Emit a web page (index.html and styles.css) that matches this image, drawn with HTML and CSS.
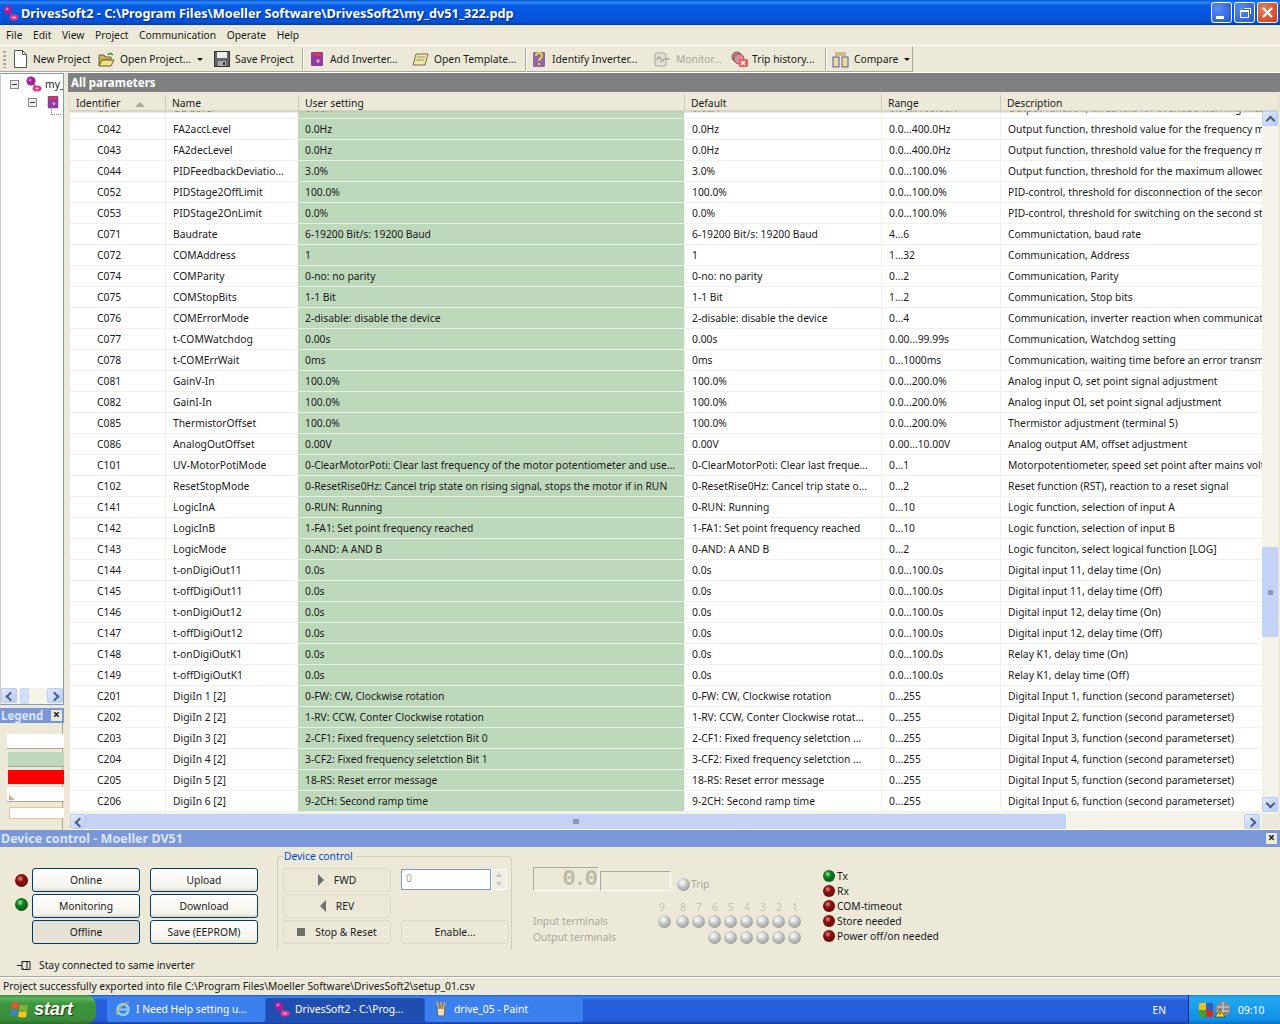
FILE: index.html
```html
<!DOCTYPE html>
<html lang="en">
<head>
  <meta charset="UTF-8" />
  <title>DrivesSoft2</title>
  <link rel="stylesheet" href="styles.css">
</head>
<body>
<svg class="defs" width="0" height="0">
  <symbol id="proj" viewBox="0 0 16 16">
    <path d="M5 6 L11 12" stroke="#7a5a9a" stroke-width="1.5"/>
    <circle cx="5" cy="5" r="4.5" fill="#a0209a"/><circle cx="4" cy="4" r="1.5" fill="#e070d8"/>
    <ellipse cx="11" cy="12.5" rx="4.5" ry="3" fill="#e8308a"/><ellipse cx="11" cy="12.5" rx="2" ry="1" fill="#f8c0e0"/>
  </symbol>
  <symbol id="inv" viewBox="0 0 16 16">
    <rect x="2" y="1" width="12" height="14" rx="1" fill="#8e3ca0"/>
    <rect x="4" y="2" width="8" height="3" fill="#e83050"/>
    <path d="M7 10h4M9 8v4" stroke="#f0b0d0" stroke-width="1.2"/>
  </symbol>
</svg>

<header class="titlebar">
  <svg class="title-icon"><use href="#proj"/></svg>
  <span class="title-text">DrivesSoft2 - C:\Program Files\Moeller Software\DrivesSoft2\my_dv51_322.pdp</span>
  <div class="win-btns">
    <div class="win-btn"><span class="glyph-min"></span></div>
    <div class="win-btn"><span class="glyph-max"></span></div>
    <div class="win-btn close"><svg width="13" height="13" viewBox="0 0 13 13"><path d="M2 2l9 9M11 2l-9 9" stroke="#fff" stroke-width="2.2"/></svg></div>
  </div>
</header>

<nav class="menubar">
  <span>File</span><span>Edit</span><span>View</span><span>Project</span><span>Communication</span><span>Operate</span><span>Help</span>
</nav>

<div class="toolbar-row">
  <div class="toolbar">
    <span class="grip"></span>
    <div class="tool" style="width:86px">
      <svg width="16" height="18" viewBox="0 0 16 18"><path d="M2.5 .5h8l4 4v13h-12z" fill="#fff" stroke="#555"/><path d="M10.5 .5v4h4" fill="none" stroke="#555"/></svg>New Project
    </div>
    <div class="tool" style="width:116px">
      <svg width="17" height="15" viewBox="0 0 17 15"><path d="M1 3h5l1 2h6v3H5L1 14z" fill="#c9b458" stroke="#6b6030"/><path d="M4 8h12l-3 6H1z" fill="#f1e08a" stroke="#6b6030"/><path d="M10 3c1-2 3-2 5 0" fill="none" stroke="#2a8a2a" stroke-width="1.3"/></svg>Open Project...<i class="drop"></i>
    </div>
    <div class="tool" style="width:82px">
      <svg width="16" height="16" viewBox="0 0 16 16"><rect x=".5" y=".5" width="15" height="15" fill="#666" stroke="#333"/><rect x="3" y="1" width="10" height="6" fill="#eee"/><rect x="4" y="10" width="8" height="5" fill="#aaa"/><rect x="9" y="11" width="2" height="3" fill="#333"/></svg>Save Project
    </div>
    <span class="tb-sep"></span>
    <div class="tool" style="width:103px"><svg width="16" height="18"><use href="#inv"/></svg>Add Inverter...</div>
    <div class="tool" style="width:107px">
      <svg width="17" height="15" viewBox="0 0 17 15"><path d="M4 2h12l-3 11H1z" fill="#ece6a0" stroke="#77705a"/><path d="M5 5h8M4 8h8" stroke="#9a9470"/></svg>Open Template...
    </div>
    <span class="tb-sep"></span>
    <div class="tool" style="width:122px">
      <svg class="tall" width="14" height="17" viewBox="0 0 14 17"><rect x="1" y="1" width="12" height="15" rx="1" fill="#9068a8"/><path d="M4 5c0-4 6-4 6 0 0 2-3 2-3 5M7 12v2" fill="none" stroke="#f0d040" stroke-width="2"/></svg>Identify Inverter...
    </div>
    <div class="tool off" style="width:77px">
      <svg width="17" height="15" viewBox="0 0 17 15"><rect x="1" y="1" width="11" height="13" rx="2" fill="#e4e1d4" stroke="#a8a69a"/><path d="M3 8c1-4 3-4 4 0s2 0 3-1h6" fill="none" stroke="#a8a69a" stroke-width="1.3"/></svg>Monitor...
    </div>
    <div class="tool narrow" style="width:88px">
      <svg width="17" height="17" viewBox="0 0 17 17"><circle cx="6" cy="6" r="5" fill="#c08088" stroke="#905058"/><circle cx="8" cy="8" r="5" fill="#d89098" stroke="#905058"/><rect x="8" y="8" width="9" height="8" rx="1" fill="#e86060"/><path d="M10 10l4 4M14 10l-4 4" stroke="#fff" stroke-width="1.4"/></svg>Trip history...
    </div>
    <span class="tb-sep"></span>
    <div class="tool" style="width:80px">
      <svg width="17" height="17" viewBox="0 0 17 17"><rect x="1" y="6" width="6" height="10" fill="#e8e090" stroke="#5858a8"/><rect x="10" y="6" width="6" height="10" fill="#e8e090" stroke="#5858a8"/><path d="M3 2h11M3 4h11" stroke="#b09030"/></svg>Compare<i class="drop"></i>
    </div>
  </div>
</div>

<main class="main">
  <aside class="side">
    <div class="tree">
      <div class="tree-nodes">
        <div class="node"><span class="minus"></span><svg class="node-icon"><use href="#proj"/></svg><span>my_dv51</span></div>
        <div class="node sub"><span class="minus"></span><svg class="node-icon small"><use href="#inv"/></svg></div>
        <span class="tree-line"></span>
      </div>
      <div class="side-scroll">
        <span class="sb-btn left"></span><span class="side-thumb"></span><span class="side-fill"></span><span class="sb-btn right"></span>
      </div>
    </div>
    <div class="legend">
      <div class="legend-head"><span>Legend</span><span class="x-btn">×</span></div>
      <div class="swatches">
        <span class="swatch plain"></span>
        <span class="swatch green"></span>
        <span class="swatch red"></span>
        <span class="swatch flag"></span>
        <span class="swatch outline"></span>
      </div>
    </div>
  </aside>

  <section class="params">
    <h2 class="params-title">All parameters</h2>
    <div class="grid-head">
      <div>Identifier<i class="sort"></i></div><div>Name</div><div>User setting</div><div>Default</div><div>Range</div><div>Description</div>
    </div>
    <div class="grid-wrap">
      <div class="grid-body">
        <div class="row cut"><div>C041</div><div>OL-Level</div><div>0.00A</div><div>0.00A</div><div>0.00...100.00A</div><div>Output function, threshold for overload warning message</div></div>
        <div class="row"><div>C042</div><div>FA2accLevel</div><div>0.0Hz</div><div>0.0Hz</div><div>0.0...400.0Hz</div><div>Output function, threshold value for the frequency matching</div></div>
        <div class="row"><div>C043</div><div>FA2decLevel</div><div>0.0Hz</div><div>0.0Hz</div><div>0.0...400.0Hz</div><div>Output function, threshold value for the frequency matching</div></div>
        <div class="row"><div>C044</div><div>PIDFeedbackDeviatio...</div><div>3.0%</div><div>3.0%</div><div>0.0...100.0%</div><div>Output function, threshold for the maximum allowed deviation</div></div>
        <div class="row"><div>C052</div><div>PIDStage2OffLimit</div><div>100.0%</div><div>100.0%</div><div>0.0...100.0%</div><div>PID-control, threshold for disconnection of the second stage</div></div>
        <div class="row"><div>C053</div><div>PIDStage2OnLimit</div><div>0.0%</div><div>0.0%</div><div>0.0...100.0%</div><div>PID-control, threshold for switching on the second stage</div></div>
        <div class="row"><div>C071</div><div>Baudrate</div><div>6-19200 Bit/s: 19200 Baud</div><div>6-19200 Bit/s: 19200 Baud</div><div>4...6</div><div>Communictation, baud rate</div></div>
        <div class="row"><div>C072</div><div>COMAddress</div><div>1</div><div>1</div><div>1...32</div><div>Communication, Address</div></div>
        <div class="row"><div>C074</div><div>COMParity</div><div>0-no: no parity</div><div>0-no: no parity</div><div>0...2</div><div>Communication, Parity</div></div>
        <div class="row"><div>C075</div><div>COMStopBits</div><div>1-1 Bit</div><div>1-1 Bit</div><div>1...2</div><div>Communication, Stop bits</div></div>
        <div class="row"><div>C076</div><div>COMErrorMode</div><div>2-disable: disable the device</div><div>2-disable: disable the device</div><div>0...4</div><div>Communication, inverter reaction when communication fails</div></div>
        <div class="row"><div>C077</div><div>t-COMWatchdog</div><div>0.00s</div><div>0.00s</div><div>0.00...99.99s</div><div>Communication, Watchdog setting</div></div>
        <div class="row"><div>C078</div><div>t-COMErrWait</div><div>0ms</div><div>0ms</div><div>0...1000ms</div><div>Communication, waiting time before an error transmission</div></div>
        <div class="row"><div>C081</div><div>GainV-In</div><div>100.0%</div><div>100.0%</div><div>0.0...200.0%</div><div>Analog input O, set point signal adjustment</div></div>
        <div class="row"><div>C082</div><div>GainI-In</div><div>100.0%</div><div>100.0%</div><div>0.0...200.0%</div><div>Analog input OI, set point signal adjustment</div></div>
        <div class="row"><div>C085</div><div>ThermistorOffset</div><div>100.0%</div><div>100.0%</div><div>0.0...200.0%</div><div>Thermistor adjustment (terminal 5)</div></div>
        <div class="row"><div>C086</div><div>AnalogOutOffset</div><div>0.00V</div><div>0.00V</div><div>0.00...10.00V</div><div>Analog output AM, offset adjustment</div></div>
        <div class="row"><div>C101</div><div>UV-MotorPotiMode</div><div>0-ClearMotorPoti: Clear last frequency of the motor potentiometer and use...</div><div>0-ClearMotorPoti: Clear last freque...</div><div>0...1</div><div>Motorpotentiometer, speed set point after mains voltage off</div></div>
        <div class="row"><div>C102</div><div>ResetStopMode</div><div>0-ResetRise0Hz: Cancel trip state on rising signal, stops the motor if in RUN</div><div>0-ResetRise0Hz: Cancel trip state o...</div><div>0...2</div><div>Reset function (RST), reaction to a reset signal</div></div>
        <div class="row"><div>C141</div><div>LogicInA</div><div>0-RUN: Running</div><div>0-RUN: Running</div><div>0...10</div><div>Logic function, selection of input A</div></div>
        <div class="row"><div>C142</div><div>LogicInB</div><div>1-FA1: Set point frequency reached</div><div>1-FA1: Set point frequency reached</div><div>0...10</div><div>Logic function, selection of input B</div></div>
        <div class="row"><div>C143</div><div>LogicMode</div><div>0-AND: A AND B</div><div>0-AND: A AND B</div><div>0...2</div><div>Logic funciton, select logical function [LOG]</div></div>
        <div class="row"><div>C144</div><div>t-onDigiOut11</div><div>0.0s</div><div>0.0s</div><div>0.0...100.0s</div><div>Digital input 11, delay time (On)</div></div>
        <div class="row"><div>C145</div><div>t-offDigiOut11</div><div>0.0s</div><div>0.0s</div><div>0.0...100.0s</div><div>Digital input 11, delay time (Off)</div></div>
        <div class="row"><div>C146</div><div>t-onDigiOut12</div><div>0.0s</div><div>0.0s</div><div>0.0...100.0s</div><div>Digital input 12, delay time (On)</div></div>
        <div class="row"><div>C147</div><div>t-offDigiOut12</div><div>0.0s</div><div>0.0s</div><div>0.0...100.0s</div><div>Digital input 12, delay time (Off)</div></div>
        <div class="row"><div>C148</div><div>t-onDigiOutK1</div><div>0.0s</div><div>0.0s</div><div>0.0...100.0s</div><div>Relay K1, delay time (On)</div></div>
        <div class="row"><div>C149</div><div>t-offDigiOutK1</div><div>0.0s</div><div>0.0s</div><div>0.0...100.0s</div><div>Relay K1, delay time (Off)</div></div>
        <div class="row"><div>C201</div><div>DigiIn 1 [2]</div><div>0-FW: CW, Clockwise rotation</div><div>0-FW: CW, Clockwise rotation</div><div>0...255</div><div>Digital Input 1, function (second parameterset)</div></div>
        <div class="row"><div>C202</div><div>DigiIn 2 [2]</div><div>1-RV: CCW, Conter Clockwise rotation</div><div>1-RV: CCW, Conter Clockwise rotat...</div><div>0...255</div><div>Digital Input 2, function (second parameterset)</div></div>
        <div class="row"><div>C203</div><div>DigiIn 3 [2]</div><div>2-CF1: Fixed frequency seletction Bit 0</div><div>2-CF1: Fixed frequency seletction ...</div><div>0...255</div><div>Digital Input 3, function (second parameterset)</div></div>
        <div class="row"><div>C204</div><div>DigiIn 4 [2]</div><div>3-CF2: Fixed frequency seletction Bit 1</div><div>3-CF2: Fixed frequency seletction ...</div><div>0...255</div><div>Digital Input 4, function (second parameterset)</div></div>
        <div class="row"><div>C205</div><div>DigiIn 5 [2]</div><div>18-RS: Reset error message</div><div>18-RS: Reset error message</div><div>0...255</div><div>Digital Input 5, function (second parameterset)</div></div>
        <div class="row"><div>C206</div><div>DigiIn 6 [2]</div><div>9-2CH: Second ramp time</div><div>9-2CH: Second ramp time</div><div>0...255</div><div>Digital Input 6, function (second parameterset)</div></div>
      </div>
      <div class="vscroll">
        <span class="sb-btn up"></span><span class="vs-top"></span><span class="vs-thumb"></span><span class="vs-bottom"></span><span class="sb-btn down"></span>
      </div>
    </div>
    <div class="hscroll">
      <span class="sb-btn left"></span><span class="hs-thumb"></span><span class="hs-rest"></span><span class="sb-btn right"></span><span class="hs-corner"></span>
    </div>
  </section>
</main>

<section class="device">
  <div class="device-head"><span>Device control - Moeller DV51</span><span class="x-btn">×</span></div>
  <div class="device-body">
    <div class="device-top">
      <div class="conn-leds"><span class="led red"></span><span class="led green"></span></div>
      <div class="conn-buttons">
        <button class="xp">Online</button><button class="xp">Upload</button>
        <button class="xp">Monitoring</button><button class="xp">Download</button>
        <button class="xp pressed">Offline</button><button class="xp">Save (EEPROM)</button>
      </div>
      <fieldset class="ctrl-group">
        <legend>Device control</legend>
        <div class="ctrl-grid">
          <button class="flat"><i class="tri-r"></i>FWD</button>
          <div class="spin"><span class="spin-input">0</span><span class="spin-arrows"><i></i><i></i></span></div>
          <button class="flat"><i class="tri-l"></i>REV</button>
          <span></span>
          <button class="flat"><i class="sq"></i>Stop &amp; Reset</button>
          <button class="flat">Enable...</button>
        </div>
      </fieldset>
      <div class="io">
        <div class="io-display">
          <div class="seg">0.0</div>
          <div class="seg-box"></div>
          <span class="led grey"></span><span class="dim">Trip</span>
        </div>
        <div class="io-row nums"><span class="wide">9</span><span>8</span><span>7</span><span>6</span><span>5</span><span>4</span><span>3</span><span>2</span><span>1</span></div>
        <div class="io-row leds"><label class="dim">Input terminals</label><span class="led grey wide"></span><span class="led grey"></span><span class="led grey"></span><span class="led grey"></span><span class="led grey"></span><span class="led grey"></span><span class="led grey"></span><span class="led grey"></span><span class="led grey"></span></div>
        <div class="io-row leds"><label class="dim">Output terminals</label><span class="led grey"></span><span class="led grey"></span><span class="led grey"></span><span class="led grey"></span><span class="led grey"></span><span class="led grey"></span></div>
      </div>
      <ul class="signals">
        <li><span class="led green"></span>Tx</li>
        <li><span class="led red"></span>Rx</li>
        <li><span class="led red"></span>COM-timeout</li>
        <li><span class="led red"></span>Store needed</li>
        <li><span class="led red"></span>Power off/on needed</li>
      </ul>
    </div>
    <div class="stay">
      <svg width="15" height="11" viewBox="0 0 15 11"><path d="M0 5.5h5M5 1v9M5 2h1.500M6 1.500h7v8H6M5 9h2M10 2v7" fill="none" stroke="#222"/></svg>
      Stay connected to same inverter
    </div>
  </div>
</section>

<footer class="statusbar">Project successfully exported into file C:\Program Files\Moeller Software\DrivesSoft2\setup_01.csv</footer>

<div class="taskbar">
  <div class="start">
    <svg width="17" height="17" viewBox="0 0 17 17"><path d="M1 2c2-1 4-1 7 .5L7 8C4 7 2 7 0 8z" fill="#e8572a"/><path d="M9 3c3 1.500 5 1.500 8 .5l-1 6c-3 1-5 .5-8-.5z" fill="#7fb13b"/><path d="M0 9c2-1 4-1 6.500 0l-1 6c-3-1-5-1-6.500 0z" fill="#3f7fd8"/><path d="M8 10c3 1 5 1 8 0l-1 6c-3 1-5 .5-8-.5z" fill="#f5c318"/></svg>
    <span>start</span>
  </div>
  <div class="task">
    <svg width="16" height="16" viewBox="0 0 16 16"><ellipse cx="8" cy="8.500" rx="5.500" ry="5.500" fill="none" stroke="#8fd0f8" stroke-width="2.500"/><path d="M3 8.500h10" stroke="#8fd0f8" stroke-width="2"/><path d="M2 14C1 10 8 2 14 1" fill="none" stroke="#e8b830" stroke-width="1.200"/></svg>
    <span>I Need Help setting u...</span>
  </div>
  <div class="task active"><svg width="16" height="16"><use href="#proj"/></svg><span>DrivesSoft2 - C:\Prog...</span></div>
  <div class="task">
    <svg width="16" height="16" viewBox="0 0 16 16"><path d="M4 7h8l-1 8H5z" fill="#e8e0c0" stroke="#665"/><path d="M6 7l-2-6M8 7V1M10 7l2-6" stroke="#e8b030" stroke-width="1.500"/><path d="M7 7l0-4" stroke="#d04040"/></svg>
    <span>drive_05 - Paint</span>
  </div>
  <div class="lang">EN</div>
  <div class="tray">
    <svg width="16" height="16" viewBox="0 0 16 16"><rect x="1" y="1" width="7" height="7" fill="#f0c020"/><rect x="8" y="1" width="7" height="7" fill="#3060c0"/><rect x="1" y="8" width="7" height="7" fill="#40a030"/><rect x="8" y="8" width="7" height="7" fill="#d03020"/></svg>
    <svg width="17" height="17" viewBox="0 0 17 17"><circle cx="9" cy="8" r="7.500" fill="#8a8a8a"/><path d="M3 6h12M3 10h12M9 1v14" stroke="#d8d8d8"/><path d="M6 8l5 8H1z" fill="#f8d820" stroke="#222" stroke-width=".6"/><path d="M6 10.500v3" stroke="#111"/></svg>
    <span class="clock">09:10</span>
  </div>
</div>
</body>
</html>
```

FILE: styles.css
```css
* {
  margin: 0;
  padding: 0;
  box-sizing: border-box;
}

html, body {
  width: 1280px;
  height: 1024px;
  overflow: hidden;
}

body {
  background: #ece9d8;
  color: #1a1a1a;
  font-family: "Noto Sans", sans-serif;
  font-size: 10.3px;
  display: flex;
  flex-direction: column;
}

.defs { position: absolute; }

/* Title bar */
.titlebar {
  height: 25px;
  display: flex;
  align-items: center;
  padding: 0 2px 0 3px;
  background: linear-gradient(180deg, #0a58d8 0%, #2a86f4 10%, #0a5ce4 22%, #0454e0 70%, #0450d0 90%, #023aa8 100%);
}

.title-icon { width: 16px; height: 16px; }

.title-text {
  margin-left: 2px;
  color: #fff;
  font-weight: bold;
  font-size: 12.7px;
  text-shadow: 1px 1px 1px #0a2a80;
}

.win-btns {
  margin-left: auto;
  display: flex;
  gap: 2px;
}

.win-btn {
  width: 21px;
  height: 21px;
  border: 1px solid #fff;
  border-radius: 3px;
  background: radial-gradient(circle at 30% 30%, #5a8ef0, #2454d0);
  display: flex;
  align-items: center;
  justify-content: center;
}

.win-btn.close { background: radial-gradient(circle at 30% 30%, #e88060, #c83a18); }

.glyph-min {
  width: 8px;
  height: 3px;
  margin: 9px 4px 0 0;
  background: #fff;
}

.glyph-max {
  width: 9px;
  height: 8px;
  border: 1px solid #fff;
  border-top-width: 2px;
  margin-top: 2px;
  box-shadow: 2px -2px 0 -1px #2454d0, 3px -3px 0 -1px #fff;
}

/* Menu */
.menubar {
  height: 20px;
  display: flex;
  align-items: center;
  padding-left: 6px;
  gap: 10.5px;
}

/* Toolbar */
.toolbar-row {
  height: 28px;
  padding-top: 1px;
  border-top: 1px solid #fff;
  border-bottom: 1px solid #fff;
}

.toolbar {
  width: 913px;
  height: 25px;
  display: flex;
  align-items: center;
  padding-left: 3px;
  border-right: 1px solid #aca899;
  border-bottom: 1px solid #aca899;
}

.grip {
  width: 3px;
  height: 17px;
  margin-right: 6px;
  background: repeating-linear-gradient(180deg, #aca899 0 2px, transparent 2px 4px);
}

.tool {
  display: flex;
  align-items: center;
  gap: 5px;
  white-space: nowrap;
  flex: none;
  height: 22px;
}

.tool.off { color: #aca899; }
.tool.narrow { gap: 4px; }
.tool .tall { margin-right: 1px; }

.drop {
  width: 0;
  height: 0;
  margin-left: 1px;
  border: 3px solid transparent;
  border-top: 3px solid #111;
  border-bottom: 0;
}

.tb-sep {
  width: 1px;
  height: 22px;
  margin: 0 6px;
  background: #aca899;
  box-shadow: 1px 0 0 #fff;
}

/* Main area */
.main {
  height: 757px;
  display: flex;
}

.side {
  width: 64px;
  flex: none;
  display: flex;
  flex-direction: column;
}

.tree {
  height: 632px;
  background: #fff;
  border: 1px solid #7f9db9;
  border-left-color: #ccc;
  display: flex;
  flex-direction: column;
}

.tree-nodes {
  flex: 1;
  position: relative;
  overflow: hidden;
}

.node {
  height: 16px;
  margin-top: 2px;
  display: flex;
  align-items: center;
  padding-left: 9px;
  gap: 7px;
  white-space: nowrap;
}

.node.sub { padding-left: 27px; gap: 9px; }

.minus {
  flex: none;
  width: 9px;
  height: 9px;
  border: 1px solid #888;
  background: linear-gradient(#333, #333) center / 5px 1px no-repeat, #eee;
}

.node-icon { width: 16px; height: 16px; flex: none; margin-right: -4px; }
.node-icon.small { width: 14px; height: 14px; }

.tree-line {
  position: absolute;
  left: 50px;
  top: 33px;
  width: 10px;
  height: 8px;
  border-left: 1px dotted #888;
  border-bottom: 1px dotted #888;
}

.side-scroll {
  height: 16px;
  display: flex;
  background: #f6f4ea;
}

.side-thumb {
  width: 9px;
  margin-left: 3px;
  border: 1px solid #c8d6f4;
  border-radius: 2px;
  background: #d4e0fa;
}

.side-fill { flex: 1; }

.legend {
  flex: 1;
  margin-top: 3px;
  display: flex;
  flex-direction: column;
}

.legend-head, .device-head {
  display: flex;
  align-items: center;
  justify-content: space-between;
  background: #7b97d8;
  color: #dce6fa;
  font-weight: bold;
  padding: 0 2px 0 1px;
}

.legend-head {
  height: 15px;
  font-size: 11.5px;
  padding-bottom: 1px;
}

.x-btn {
  width: 11px;
  height: 11px;
  background: #ece9d8;
  color: #111;
  font-size: 12px;
  line-height: 10px;
  text-align: center;
}

.swatches {
  flex: 1;
  display: flex;
  flex-direction: column;
  padding: 11px 0 0 7px;
  gap: 3px;
  background: linear-gradient(#aca899, #aca899) 62px 0 / 1px 100% no-repeat;
}

.swatch {
  height: 15px;
  border-bottom: 1px solid #aca899;
}

.swatch.plain { background: #fff; }
.swatch.green { background: #bdd8bb; margin-left: 1px; }
.swatch.red { background: #f00; height: 14px; margin-left: 1px; border-bottom: 0; }
.swatch.flag { background: linear-gradient(45deg, #e0a888 50%, transparent 50%) 2px 7px / 6px 6px no-repeat, #fff; }
.swatch.outline { height: 12px; margin-left: 2px; margin-top: 2px; background: #fff; border: 1px solid #e8c0a0; border-right: 0; }

.params {
  flex: 1;
  margin-left: 6px;
  min-width: 0;
  display: flex;
  flex-direction: column;
  margin-right: 2px;
}

.params-title {
  height: 19px;
  background: #808080;
  color: #fff;
  font-size: 11.5px;
  line-height: 20px;
  padding-left: 3px;
  margin-left: -2px;
  margin-right: -2px;
}

.grid-head {
  height: 17px;
  margin-top: 2px;
  display: grid;
  grid-template-columns: 95px 133px 386px 197px 119px 1fr;
  align-items: center;
  border-bottom: 1px solid #d6d2c2;
  box-shadow: 0 1px 2px #c8c4b4;
  position: relative;
}

.grid-head > div {
  padding-left: 6px;
  height: 15px;
  line-height: 17px;
  border-left: 1px solid #cdc9b8;
}

.grid-head > div:first-child { border-left: 0; }

.sort {
  display: inline-block;
  margin-left: 14px;
  border: 5px solid transparent;
  border-top: 0;
  border-bottom: 5px solid #aca899;
}

.grid-wrap {
  height: 701px;
  display: flex;
  background: #fff;
}

.grid-body {
  width: 1192px;
  flex: none;
  overflow: hidden;
}

.row {
  height: 21px;
  display: grid;
  grid-template-columns: 95px 133px 386px 197px 119px 262px;
  align-items: center;
}

.row.cut { margin-top: -13px; }

.row > div {
  height: 21px;
  line-height: 21px;
  padding-left: 7px;
  white-space: nowrap;
  overflow: hidden;
  border-bottom: 1px solid #f0f0ee;
  border-left: 1px solid #f0f0ee;
}

.row > div:first-child { padding-left: 27px; border-left: 0; }

.row > div:nth-child(3) {
  padding-left: 6px;
  background: #bdd8bb;
  border-bottom-color: #e6f0e4;
  border-left-color: #bdd8bb;
}

.vscroll {
  width: 16px;
  display: flex;
  flex-direction: column;
  background: #f4f2e9;
}

.vs-top { height: 421px; }
.vs-bottom { flex: 1; }

.vs-thumb {
  height: 90px;
  border: 1px solid #c0d0f4;
  border-radius: 2px;
  background: linear-gradient(#8a98b8, #8a98b8) center / 5px 5px no-repeat, #c4d4f8;
}

.sb-btn {
  width: 16px;
  height: 15px;
  flex: none;
  position: relative;
  border: 1px solid #bccdf4;
  border-radius: 2px;
  background: linear-gradient(135deg, #e2ebfe, #b8cbf5);
}

.sb-btn::after {
  content: "";
  position: absolute;
  left: 4px;
  top: 4px;
  width: 5px;
  height: 5px;
  border-left: 2px solid #4d6185;
  border-top: 2px solid #4d6185;
}

.sb-btn.left::after { transform: rotate(-45deg); left: 5px; }
.sb-btn.right::after { transform: rotate(135deg); left: 3px; }
.sb-btn.up::after { transform: rotate(45deg); top: 5px; }
.sb-btn.down::after { transform: rotate(225deg); top: 2px; }

.hscroll {
  height: 18px;
  padding-top: 2px;
  display: flex;
  background: #f4f2e9;
  border-bottom: 1px solid #fff;
}

.hs-thumb {
  width: 980px;
  height: 15px;
  border: 1px solid #c0d0f4;
  border-radius: 2px;
  background: linear-gradient(#8a98b8, #8a98b8) center / 6px 5px no-repeat, #c4d4f8;
}

.hs-rest { flex: 1; }
.hs-corner { width: 16px; background: #ece9d8; margin-left: 2px; }

/* Device control */
.device {
  height: 146px;
  display: flex;
  flex-direction: column;
}

.device-head {
  height: 17px;
  font-size: 12.5px;
  padding-right: 3px;
}

.device-body {
  flex: 1;
  padding: 8px 0 0 15px;
  display: flex;
  flex-direction: column;
}

.device-top {
  display: flex;
  height: 95px;
}

.conn-leds {
  width: 17px;
  padding-top: 19px;
  display: flex;
  flex-direction: column;
  gap: 11px;
}

.led {
  display: block;
  width: 13px;
  height: 13px;
  flex: none;
  border-radius: 50%;
}

.led.red { background: radial-gradient(circle at 40% 35%, #d07070 0 8%, #8c1010 30%, #5a0808 85%); }
.led.green { background: radial-gradient(circle at 40% 35%, #80d080 0 8%, #108020 30%, #085012 85%); }
.led.grey { background: radial-gradient(circle at 40% 35%, #f4f4f4 0 10%, #c4c4c4 40%, #8c8c8c 90%); }

.conn-buttons {
  display: grid;
  grid-template-columns: 108px 108px;
  grid-auto-rows: 24px;
  gap: 2px 10px;
  padding-top: 13px;
}

button {
  font: inherit;
  color: inherit;
}

.xp {
  border: 1px solid #003c74;
  border-radius: 3px;
  background: linear-gradient(#fff, #f4f2ea 85%, #dcd8c8);
}

.xp.pressed { background: linear-gradient(#e2dfd2, #e8e5d8); }

.ctrl-group {
  width: 235px;
  margin: -6px 0 0 19px;
  height: 101px;
  padding: 5px 0 0 5px;
  border: 1px solid #d0d0bf;
  border-bottom: 0;
  border-radius: 4px 4px 0 0;
}

.ctrl-group legend {
  margin-left: 1px;
  padding-right: 3px;
  color: #0046d5;
}

.ctrl-grid {
  display: grid;
  grid-template-columns: 108px 108px;
  grid-auto-rows: 24px;
  gap: 2px 10px;
}

.flat {
  display: flex;
  align-items: center;
  justify-content: center;
  gap: 10px;
  border: 1px solid #dedbcc;
  border-radius: 3px;
  background: #ebe8d8;
  color: #222;
}

.tri-r, .tri-l {
  border: 6px solid transparent;
}

.tri-r { border-left: 6px solid #707070; border-right: 0; }
.tri-l { border-right: 6px solid #707070; border-left: 0; }
.sq { width: 8px; height: 8px; background: #707070; }

.spin {
  display: flex;
  height: 21px;
  margin-top: 1px;
}

.spin-input {
  width: 90px;
  padding-left: 4px;
  line-height: 17px;
  background: #fff;
  color: #aca899;
  border: 1px solid #7f9db9;
}

.spin-arrows {
  width: 16px;
  display: flex;
  flex-direction: column;
  align-items: center;
  justify-content: space-around;
  background: #f0eee2;
  border: 1px solid #fff;
}

.spin-arrows i {
  border: 3px solid transparent;
  border-top: 0;
  border-bottom: 4px solid #c8c6ba;
}

.spin-arrows i:last-child {
  border-bottom: 0;
  border-top: 4px solid #c8c6ba;
}

.io {
  width: 270px;
  margin-left: 21px;
  padding-top: 12px;
  color: #aca899;
}

.io-display {
  display: flex;
  align-items: flex-end;
  height: 24px;
}

.seg {
  width: 66px;
  height: 24px;
  padding-right: 2px;
  text-align: right;
  font: bold 22px/23px "Liberation Mono", monospace;
  letter-spacing: -2px;
  color: #bdbaa8;
  border: 1px solid #aca899;
  border-right-color: #fff;
  border-bottom-color: #fff;
}

.seg-box {
  width: 71px;
  height: 20px;
  margin: 0 6px 0 1px;
  border: 1px solid #aca899;
  border-right-color: #fff;
  border-bottom-color: #fff;
}

.dim { color: #aca899; margin-left: 1px; }

.io-row {
  display: flex;
  justify-content: flex-end;
  align-items: center;
  gap: 3px;
  height: 16px;
}

.io-row.leds { padding-right: 2px; }
.io-row .led.wide { margin-right: 2px; }
.io-row label { margin: 0 auto 0 0; }

.io-row.nums {
  height: 13px;
  margin-top: 9px;
  gap: 0;
  color: #c4c2b4;
}

.io-row.nums span { width: 16px; text-align: center; }
.io-row.nums span.wide { width: 18px; text-align: left; padding-left: 2px; }

.signals {
  list-style: none;
  margin-left: 20px;
  padding-top: 13px;
}

.signals li {
  height: 15px;
  display: flex;
  align-items: center;
  gap: 2px;
  white-space: nowrap;
}

.signals .led { width: 12px; height: 12px; }

.stay {
  display: flex;
  align-items: center;
  gap: 7px;
  margin: 8px 0 0 2px;
}

/* Status bar */
.statusbar {
  height: 19px;
  line-height: 19px;
  padding-left: 3px;
  border-top: 1px solid #aca899;
  box-shadow: inset 0 1px 0 #fff;
}

/* Taskbar */
.taskbar {
  flex: 1;
  display: flex;
  align-items: center;
  color: #fff;
  background: linear-gradient(180deg, #1f5fd8 0%, #3a86f0 8%, #245edb 20%, #245edb 85%, #1941a5 100%);
}

.start {
  width: 96px;
  height: 100%;
  display: flex;
  align-items: center;
  gap: 6px;
  padding-left: 11px;
  margin-right: 11px;
  border-radius: 0 10px 10px 0;
  background: linear-gradient(180deg, #3c8f3c 0%, #5bb45b 12%, #3d963d 30%, #3a8c3a 85%, #2a6e2a 100%);
}

.start span {
  font: italic bold 18px "Liberation Sans", sans-serif;
  text-shadow: 1px 1px 1px #143a14;
}

.task {
  width: 158px;
  height: 24px;
  margin-right: 1px;
  padding: 0 0 2px 8px;
  display: flex;
  align-items: center;
  gap: 5px;
  white-space: nowrap;
  border-radius: 2px;
  background: #3c80f0;
}

.task.active { background: #1e4fb0; }

.lang {
  margin-left: auto;
  margin-right: 22px;
}

.tray {
  width: 92px;
  height: 100%;
  display: flex;
  align-items: center;
  gap: 0;
  padding-left: 9px;
  background: linear-gradient(180deg, #1290e0 0%, #22a8f0 10%, #1090e8 85%, #0c70c0 100%);
  border-left: 1px solid #0e2a80;
}

.clock { margin-left: 7px; }
```
